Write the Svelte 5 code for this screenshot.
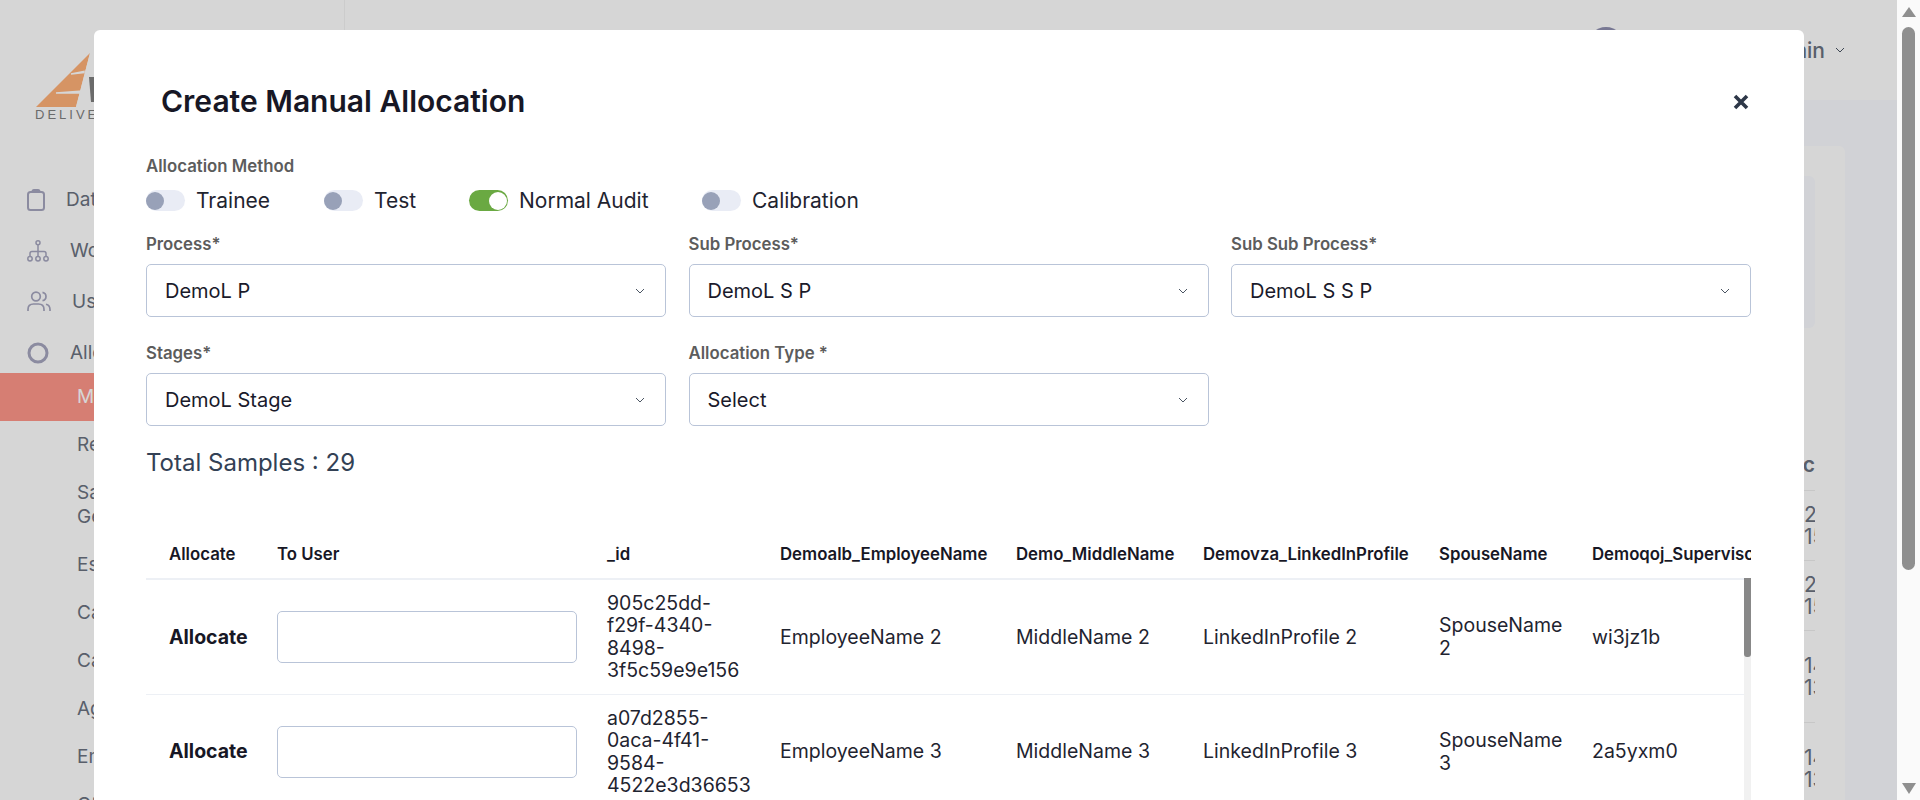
<script>
  const menu = [
    { label: 'Data Upload', icon: 'clip' },
    { label: 'Workflow', icon: 'tree' },
    { label: 'Users', icon: 'users' },
    { label: 'Allocation', icon: 'ring' }
  ];
  const subMenu = ['Manual', 'Reallocate', 'Sample Generation', 'Escalation', 'Calibration', 'Cases', 'Agents', 'Email', 'Other'];
  const methods = [
    { label: 'Trainee', on: false, cls: 'm1' },
    { label: 'Test', on: false, cls: 'm2' },
    { label: 'Normal Audit', on: true, cls: 'm3' },
    { label: 'Calibration', on: false, cls: 'm4' }
  ];
  const fields = [
    { label: 'Process*', value: 'DemoL P' },
    { label: 'Sub Process*', value: 'DemoL S P' },
    { label: 'Sub Sub Process*', value: 'DemoL S S P' },
    { label: 'Stages*', value: 'DemoL Stage' },
    { label: 'Allocation Type *', value: 'Select' }
  ];
  const columns = ['Allocate', 'To User', '_id', 'Demoalb_EmployeeName', 'Demo_MiddleName', 'Demovza_LinkedInProfile', 'SpouseName', 'Demoqoj_Supervisor'];
  const rows = [
    { id: '905c25dd-f29f-4340-8498-3f5c59e9e156', n: 2, sup: 'wi3jz1b' },
    { id: 'a07d2855-0aca-4f41-9584-4522e3d36653', n: 3, sup: '2a5yxm0' }
  ];
  const behind = [
    { top: '2024', bottom: '15:20', h: 'r1' },
    { top: '2024', bottom: '15:20', h: 'r1' },
    { top: '14/02', bottom: '13:10', h: 'r2' },
    { top: '14/02', bottom: '13:10', h: 'r2' }
  ];
</script>

{#snippet chevron()}
  <svg class="chev" viewBox="0 0 10 6" width="10" height="6"><path d="M1 1l4 4 4-4" fill="none" stroke="#4b5563" stroke-width="1"/></svg>
{/snippet}

<div class="screen">
  <div class="page">
    <aside class="sidebar">
      <div class="logo">
        <svg width="120" height="55" viewBox="0 0 120 55">
          <path d="M55 0L1 54h40z" fill="#ffb178"/>
          <path d="M55 0l-14 54h53V0z" fill="#fff"/>
          <path d="M36 21l13-1.500v-1zM21 40l26-2v2z" fill="#fff" stroke="#fff" stroke-width="1.500"/>
          <path d="M54 24h20v25H56z" fill="#808080"/>
        </svg>
        <span class="logo-text">DELIVERY</span>
      </div>
      <nav class="nav">
        {#each menu as item}
          <div class="nav-item">
            <span class="nav-icon">
              {#if item.icon === 'clip'}
                <svg width="18" height="22" viewBox="0 0 18 22" fill="none" stroke="#a6a6bf" stroke-width="2"><rect x="1" y="3" width="16" height="18" rx="2.500"/><path d="M5.500 3.500V2.500q0-1.500 1.500-1.500h4q1.500 0 1.500 1.500v1" /></svg>
              {:else if item.icon === 'tree'}
                <svg width="22" height="22" viewBox="0 0 22 22" fill="none" stroke="#a6a6bf" stroke-width="1.500"><circle cx="11" cy="2.800" r="2"/><path d="M11 5v12M3 16.500v-3q0-2 2-2h12q2 0 2 2v3"/><circle cx="3" cy="18.800" r="2.200"/><circle cx="11" cy="18.800" r="2.200"/><circle cx="19" cy="18.800" r="2.200"/></svg>
              {:else if item.icon === 'users'}
                <svg width="24" height="21" viewBox="0 0 24 21" fill="none" stroke="#a6a6bf" stroke-width="1.700"><circle cx="9" cy="5.500" r="4.300"/><path d="M1 20v-1.500q0-5.500 5.500-5.500h5q5.500 0 5.500 5.500V20M15.500 1.300q3.500.7 3.500 4.200t-3.500 4.200M19 13.200q4 1 4 5.300V20"/></svg>
              {:else}
                <svg width="22" height="22" viewBox="0 0 22 22" fill="none" stroke="#a6a6bf" stroke-width="3"><circle cx="11" cy="11" r="9"/></svg>
              {/if}
            </span>
            <span>{item.label}</span>
          </div>
        {/each}
        <div class="sub">
          {#each subMenu as label, i}
            <div class="sub-item" class:active={i === 0}>{label}</div>
          {/each}
        </div>
      </nav>
    </aside>

    <main class="main">
      <header class="topbar">
        <span class="avatar"></span>
        <span class="user">Admin</span>
        {@render chevron()}
      </header>
      <section class="content">
        <div class="card">
          <div class="panel"></div>
          <div class="behind-table">
            <div class="behind-head"><span>Proc</span></div>
            {#each behind as row}
              <div class="behind-row {row.h}"><span>{row.top}</span><span>{row.bottom}</span></div>
            {/each}
          </div>
        </div>
      </section>
    </main>

    <div class="overlay"></div>

    <div class="modal">
      <div class="modal-head">
        <h2>Create Manual Allocation</h2>
        <svg class="close" width="16" height="16" viewBox="0 0 16 16"><path d="M2 2l12 12M14 2L2 14" stroke="#2d3748" stroke-width="3.600" fill="none"/></svg>
      </div>

      <div class="label method-label">Allocation Method</div>
      <div class="methods">
        {#each methods as m}
          <div class="method {m.cls}">
            <span class="toggle" class:on={m.on}><span class="knob"></span></span>
            <span>{m.label}</span>
          </div>
        {/each}
      </div>

      <div class="fields">
        {#each fields as f}
          <div class="field">
            <div class="label">{f.label}</div>
            <div class="select">
              <span>{f.value}</span>
              {@render chevron()}
            </div>
          </div>
        {/each}
      </div>

      <div class="total">Total Samples : 29</div>

      <div class="table-wrap">
        <table>
          <colgroup>
            <col style="width:108px" /><col style="width:330px" /><col style="width:173px" /><col style="width:236px" />
            <col style="width:187px" /><col style="width:236px" /><col style="width:153px" /><col style="width:240px" />
          </colgroup>
          <thead>
            <tr>
              {#each columns as c}
                <th>{c}</th>
              {/each}
            </tr>
          </thead>
          <tbody>
            {#each rows as r}
              <tr>
                <td class="strong">Allocate</td>
                <td><div class="user-input"></div></td>
                <td>{r.id}</td>
                <td>EmployeeName {r.n}</td>
                <td>MiddleName {r.n}</td>
                <td>LinkedInProfile {r.n}</td>
                <td>SpouseName {r.n}</td>
                <td>{r.sup}</td>
              </tr>
            {/each}
          </tbody>
        </table>
        <div class="table-scroll"><div class="table-thumb"></div></div>
      </div>
    </div>
  </div>

  <div class="scrollbar">
    <span class="arrow up"></span>
    <div class="track"><div class="thumb"></div></div>
    <span class="arrow down"></span>
  </div>
</div>

<style>
  :global(body) {
    margin: 0;
    font-family: Inter, "Liberation Sans", sans-serif;
  }

  .screen {
    display: flex;
    width: 1920px;
    height: 800px;
    overflow: hidden;
  }

  .page {
    position: relative;
    display: flex;
    width: 1897px;
    height: 800px;
    overflow: hidden;
    background: #fafbff;
  }

  /* sidebar under the backdrop */
  .sidebar {
    width: 345px;
    flex: none;
    background: #fff;
    border-right: 1px solid #f3f3f3;
    box-sizing: border-box;
  }

  .logo {
    display: flex;
    flex-direction: column;
    padding: 53px 0 0 35px;
    height: 174px;
    box-sizing: border-box;
  }

  .logo svg {
    display: block;
  }

  .logo-text {
    font-family: "Liberation Sans", sans-serif;
    font-size: 13px;
    line-height: 13px;
    letter-spacing: 3px;
    color: #808080;
    white-space: nowrap;
  }

  .nav-item {
    display: flex;
    align-items: center;
    gap: 21px;
    height: 51px;
    padding-left: 27px;
    font-size: 19px;
    color: #6b7280;
  }

  .nav-icon {
    display: flex;
  }

  .sub {
    margin-top: -5px;
  }

  .sub-item {
    display: flex;
    align-items: center;
    width: 200px;
    min-height: 48px;
    padding: 0 0 0 77px;
    font-size: 19px;
    line-height: 24px;
    color: #6b7280;
  }

  .sub-item:nth-child(3) {
    width: 90px;
    min-height: 72px;
  }

  .sub-item.active {
    width: 345px;
    box-sizing: border-box;
    background: #ff9789;
    color: #fff;
  }

  .main {
    flex: 1;
    min-width: 0;
  }

  .topbar {
    display: flex;
    align-items: center;
    justify-content: flex-end;
    height: 100px;
    padding-right: 52px;
    background: #fff;
    box-sizing: border-box;
    gap: 10px;
  }

  .avatar {
    width: 38px;
    height: 38px;
    margin-right: 126px;
    margin-bottom: 8px;
    border-radius: 50%;
    background: #8f8fb0;
  }

  .user {
    font-size: 21px;
    color: #6b7280;
    font-weight: 500;
  }

  .content {
    padding: 46px 52px 0 40px;
  }

  .card {
    position: relative;
    height: 700px;
    padding: 30px 30px 0;
    background: #fff;
    border-radius: 6px;
    box-sizing: border-box;
  }

  .panel {
    height: 152px;
    background: #fafbff;
    border-radius: 6px;
  }

  .behind-table {
    margin-top: 126px;
    color: #6b7280;
    font-size: 21px;
  }

  .behind-head {
    display: flex;
    justify-content: flex-end;
    font-weight: 600;
    height: 22px;
    line-height: 22px;
    padding-bottom: 14px;
    border-bottom: 1px solid #eee;
  }

  .behind-head span {
    width: 11px;
    overflow: hidden;
    direction: rtl;
  }

  .behind-row {
    display: flex;
    flex-direction: column;
    align-items: flex-end;
    justify-content: center;
    line-height: 22px;
    border-bottom: 1px solid #eee;
    box-sizing: border-box;
  }

  .behind-row span {
    width: 11px;
    overflow: hidden;
    white-space: nowrap;
  }

  .r1 { height: 70px; }
  .r2 { height: 92px; }

  .overlay {
    position: absolute;
    inset: 0;
    background: rgba(0, 0, 0, .16);
  }

  .modal {
    position: absolute;
    left: 94px;
    top: 30px;
    width: 1710px;
    height: 800px;
    padding: 0 53px 0 52px;
    box-sizing: border-box;
    background: #fff;
    border-radius: 6px 6px 0 0;
    color: #1a1a2b;
  }

  .modal-head {
    display: flex;
    align-items: flex-start;
    justify-content: space-between;
    height: 122px;
    padding: 50px 2px 0 15px;
    box-sizing: border-box;
  }

  h2 {
    margin: 0;
    font-size: 30px;
    line-height: 42px;
    font-weight: 600;
    color: #171725;
  }

  .close {
    margin-top: 14px;
  }

  .label {
    font-size: 16.8px;
    line-height: 20px;
    font-weight: 600;
    color: #5c5c5c;
  }

  .method-label {
    margin-top: 4px;
  }

  .methods {
    display: flex;
    align-items: center;
    height: 31px;
    margin-top: 9px;
    font-size: 21px;
    color: #1f2430;
  }

  .method {
    display: flex;
    align-items: center;
    gap: 11px;
  }

  .m1 { width: 178px; }
  .m2 { width: 145px; }
  .m3 { width: 233px; }

  .toggle {
    display: flex;
    align-items: center;
    width: 39px;
    height: 21px;
    border-radius: 11px;
    background: #e9ecf5;
  }

  .knob {
    width: 18px;
    height: 18px;
    border-radius: 50%;
    background: #98a1b8;
  }

  .toggle.on {
    justify-content: flex-end;
    background: #6aa942;
  }

  .toggle.on .knob {
    background: #fff;
    margin-right: 1px;
  }

  .fields {
    display: grid;
    grid-template-columns: repeat(3, 520px);
    column-gap: 22.5px;
    row-gap: 26px;
    margin-top: 18px;
  }

  .field .label {
    margin-bottom: 10px;
  }

  .select {
    display: flex;
    align-items: center;
    justify-content: space-between;
    height: 53px;
    padding: 0 20px 0 18px;
    border: 1px solid #b9c4d8;
    border-radius: 5px;
    box-sizing: border-box;
    font-size: 20px;
    color: #1a1a2b;
  }

  .total {
    margin-top: 22px;
    font-size: 24px;
    line-height: 30px;
    color: #334155;
  }

  .table-wrap {
    position: relative;
    margin-top: 64px;
    width: 1605px;
    overflow: hidden;
  }

  table {
    width: 1663px;
    table-layout: fixed;
    border-collapse: collapse;
  }

  th {
    height: 37px;
    padding: 0 0 12px 23px;
    box-sizing: border-box;
    text-align: left;
    font-size: 16.8px;
    font-weight: 600;
    white-space: nowrap;
    color: #171725;
    border-bottom: 2px solid #edf0f5;
  }

  td {
    height: 115px;
    padding: 0 10px 0 23px;
    box-sizing: border-box;
    font-size: 19.5px;
    line-height: 22.5px;
    color: #1f2430;
    border-bottom: 1px solid #edf0f5;
  }

  td.strong {
    font-weight: 700;
    padding-right: 0;
    color: #171725;
  }

  .user-input {
    width: 300px;
    height: 52px;
    border: 1px solid #b9c4d8;
    border-radius: 5px;
    box-sizing: border-box;
  }

  .table-scroll {
    position: absolute;
    right: 0;
    top: 36px;
    bottom: 0;
    width: 7px;
    background: #f1f1f1;
  }

  .table-thumb {
    height: 79px;
    background: #888;
    border-radius: 0 0 3px 3px;
  }

  .scrollbar {
    display: flex;
    flex-direction: column;
    align-items: center;
    width: 23px;
    flex: none;
    background: #fafafa;
  }

  .arrow {
    flex: none;
    width: 0;
    height: 0;
    border-left: 7px solid transparent;
    border-right: 7px solid transparent;
  }

  .arrow.up {
    margin-top: 7px;
    border-bottom: 10px solid #8f8f8f;
  }

  .arrow.down {
    margin-bottom: 6px;
    border-top: 11px solid #8f8f8f;
  }

  .track {
    flex: 1;
    width: 13px;
    margin-top: 10px;
  }

  .thumb {
    height: 543px;
    background: #8f8f8f;
    border-radius: 7px;
  }
</style>
